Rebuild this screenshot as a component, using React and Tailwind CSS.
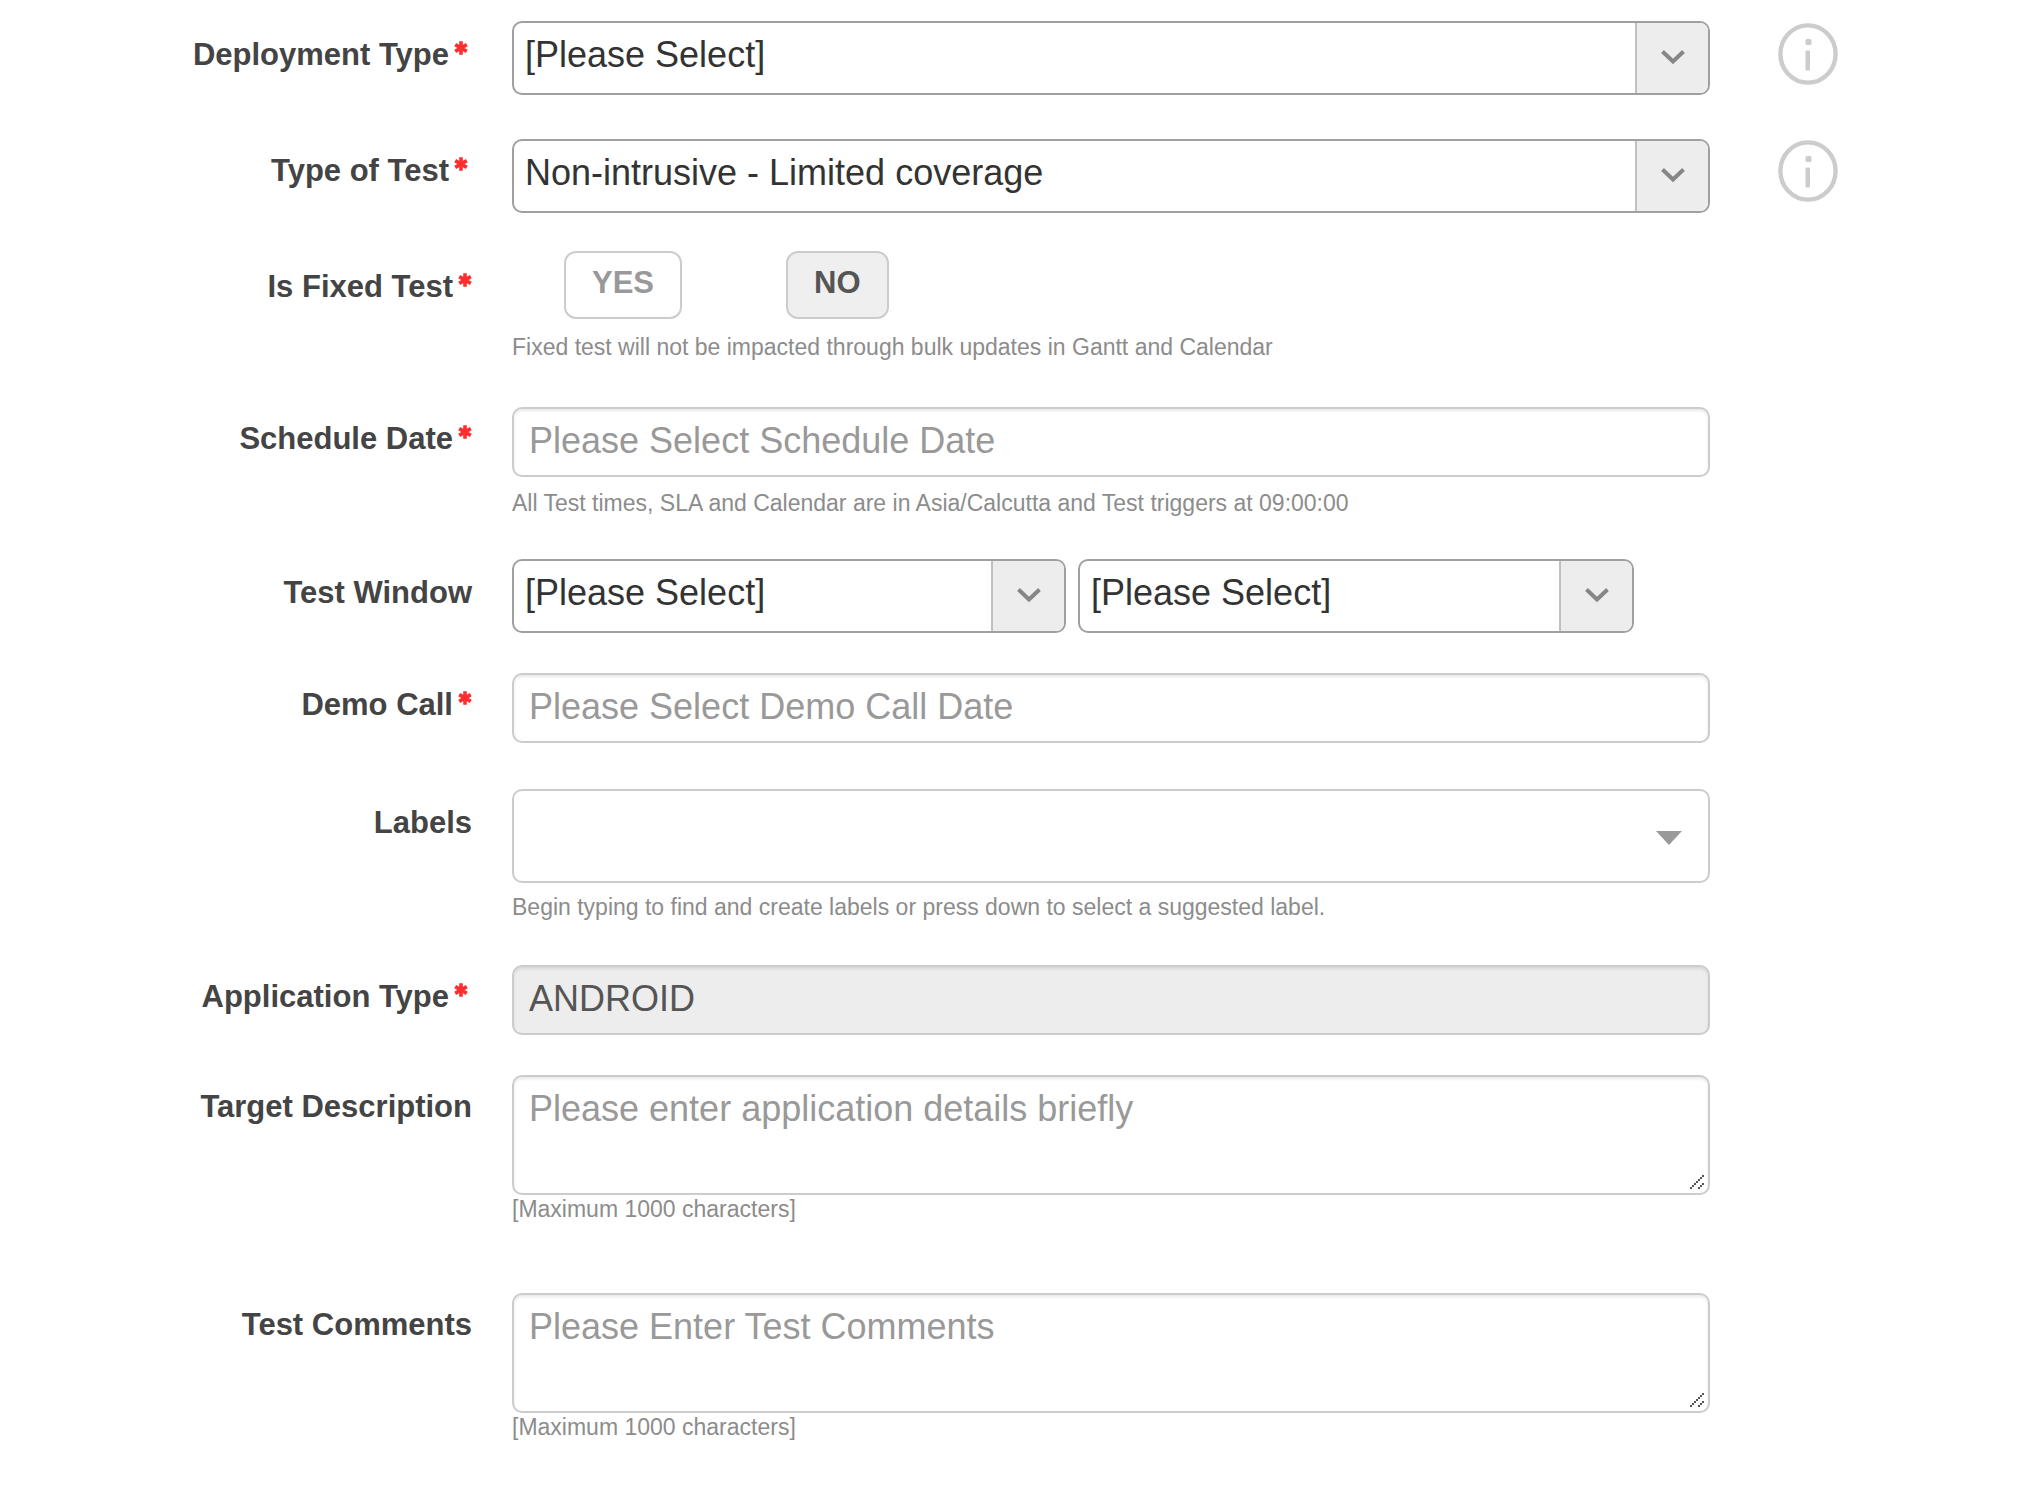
import React from "react";

const inputClass =
  "block w-full rounded-[10px] border-2 border-[#ccc] px-[15px] text-[36px] leading-[41px] shadow-[inset_0_2px_3px_rgba(0,0,0,0.09)] outline-none placeholder:text-[#999] placeholder:opacity-100";

function Star() {
  return (
    <svg
      className="mt-1 shrink-0"
      width="14"
      height="14"
      viewBox="0 0 14 14"
      stroke="#ff2d2d"
      strokeWidth="3.6"
      aria-hidden="true"
    >
      <path d="M7 0.3V13.7M1.2 3.6 12.8 10.4M12.8 3.6 1.2 10.4" />
    </svg>
  );
}

function Row({ label, htmlFor, required, children, aside, className = "", labelClass = "pt-[14px]" }) {
  return (
    <div className={`grid grid-cols-[512fr_1198fr_324fr] ${className}`}>
      <div className={`flex items-start justify-end pr-10 text-right text-[31px] leading-[36px] font-bold text-[#444] ${labelClass}`}>
        <label htmlFor={htmlFor} className="flex items-start gap-[5px]">
          {label}
          {required && <Star />}
        </label>
      </div>
      <div className="min-w-0">{children}</div>
      <div>{aside}</div>
    </div>
  );
}

function Select({ id, value, label }) {
  return (
    <div className="relative h-[74px] w-full min-w-0 overflow-hidden rounded-[10px] border-2 border-[#a0a0a0] bg-white">
      <select
        id={id}
        aria-label={label}
        defaultValue={value}
        className="block h-full w-full appearance-none bg-transparent pr-20 pb-[6px] pl-[11px] text-[36px] text-[#333] outline-none"
      >
        <option>{value}</option>
      </select>
      <div className="pointer-events-none absolute inset-y-0 right-0 flex w-[73px] items-center justify-center border-l-2 border-[#c0c0c0] bg-[#ededed] pb-[2px]">
        <svg width="24" height="16" viewBox="0 0 24 16" fill="none" stroke="#868686" strokeWidth="4">
          <path d="M1.5 2.5 12 12.5 22.5 2.5" />
        </svg>
      </div>
    </div>
  );
}

function Hint({ className = "", children }) {
  return <p className={`text-[23px] leading-[28px] text-[#8c8c8c] ${className}`}>{children}</p>;
}

function Info({ label }) {
  return (
    <button type="button" aria-label={label} className="ml-[68px] block">
      <svg width="60" height="62" viewBox="0 0 60 62" fill="none">
        <ellipse cx="30" cy="31" rx="27.6" ry="28.6" stroke="#cccccc" strokeWidth="4.4" />
        <rect x="27.5" y="16" width="6" height="6" rx="1.5" fill="#cccccc" />
        <rect x="27.5" y="27.5" width="4.5" height="20" rx="1" fill="#cccccc" />
      </svg>
    </button>
  );
}

const gripDots = [
  [0, 12], [2, 10], [4, 8], [6, 6], [8, 4], [10, 2], [12, 0],
  [8, 12], [10, 10], [12, 8],
];

function TextArea({ id, placeholder }) {
  return (
    <div className="relative">
      <textarea id={id} placeholder={placeholder} className={`${inputClass} h-[120px] resize-none bg-white pt-[11px] text-[#555]`} />
      <svg
        className="pointer-events-none absolute right-[6px] bottom-[6px]"
        width="14"
        height="14"
        fill="#555"
        shapeRendering="crispEdges"
      >
        {gripDots.map(([x, y]) => (
          <rect key={`${x}-${y}`} x={x} y={y} width="2" height="2" />
        ))}
      </svg>
    </div>
  );
}

export default function App() {
  return (
    <form className="min-h-screen bg-white pt-[21px] pb-10 font-['Liberation_Sans',Arial,sans-serif]">
      <Row
        label="Deployment Type"
        htmlFor="deployment"
        required
        labelClass="pt-4 mr-1"
        aside={<div className="pt-[2px]"><Info label="About deployment type" /></div>}
      >
        <Select id="deployment" value="[Please Select]" />
      </Row>

      <Row
        label="Type of Test"
        htmlFor="test-type"
        required
        className="mt-11"
        labelClass="pt-[14px] mr-1"
        aside={<div className="pt-px"><Info label="About type of test" /></div>}
      >
        <Select id="test-type" value="Non-intrusive - Limited coverage" />
      </Row>

      <Row label="Is Fixed Test" htmlFor="fixed-yes" required className="mt-[38px]" labelClass="pt-[18px]">
        <div className="flex gap-[104px] pl-[52px]">
          <button
            id="fixed-yes"
            type="button"
            aria-pressed="false"
            className="h-[68px] rounded-xl border-2 border-[#ccc] bg-white px-[26px] pb-1 text-[31px] font-bold text-[#999]"
          >
            YES
          </button>
          <button
            type="button"
            aria-pressed="true"
            className="h-[68px] rounded-xl border-2 border-[#ccc] bg-[#efefef] px-[26px] pb-1 text-[31px] font-bold text-[#555]"
          >
            NO
          </button>
        </div>
        <Hint className="mt-[14px]">Fixed test will not be impacted through bulk updates in Gantt and Calendar</Hint>
      </Row>

      <Row label="Schedule Date" htmlFor="schedule" required className="mt-[46px]">
        <input id="schedule" type="text" placeholder="Please Select Schedule Date" className={`${inputClass} h-[70px] bg-white pb-[2px] text-[#555]`} />
        <Hint className="mt-3">All Test times, SLA and Calendar are in Asia/Calcutta and Test triggers at 09:00:00</Hint>
      </Row>

      <Row label="Test Window" htmlFor="window-start" className="mt-[42px]" labelClass="pt-4">
        <div className="grid grid-cols-[554fr_556fr_64fr] gap-x-3">
          <Select id="window-start" value="[Please Select]" />
          <Select id="window-end" value="[Please Select]" label="Test Window end" />
        </div>
      </Row>

      <Row label="Demo Call" htmlFor="demo" required className="mt-10">
        <input id="demo" type="text" placeholder="Please Select Demo Call Date" className={`${inputClass} h-[70px] bg-white pb-[2px] text-[#555]`} />
      </Row>

      <Row label="Labels" htmlFor="labels" className="mt-[46px]" labelClass="pt-4">
        <div className="relative">
          <input
            id="labels"
            type="text"
            role="combobox"
            aria-expanded="false"
            className="block h-[94px] w-full rounded-[10px] border-2 border-[#ccc] bg-white pr-16 pl-[15px] text-[36px] text-[#555] outline-none"
          />
          <svg className="pointer-events-none absolute top-[42px] right-7" width="26" height="14" viewBox="0 0 26 14" fill="#999">
            <path d="M0 0H26L13 14Z" />
          </svg>
        </div>
        <Hint className="mt-[10px]">Begin typing to find and create labels or press down to select a suggested label.</Hint>
      </Row>

      <Row label="Application Type" htmlFor="app-type" required className="mt-11" labelClass="pt-[14px] mr-1">
        <input id="app-type" type="text" readOnly value="ANDROID" className={`${inputClass} h-[70px] bg-[#ededed] pb-[2px] text-[#555]`} />
      </Row>

      <Row label="Target Description" htmlFor="target" className="mt-10">
        <TextArea id="target" placeholder="Please enter application details briefly" />
        <Hint>[Maximum 1000 characters]</Hint>
      </Row>

      <Row label="Test Comments" htmlFor="comments" className="mt-[70px]">
        <TextArea id="comments" placeholder="Please Enter Test Comments" />
        <Hint>[Maximum 1000 characters]</Hint>
      </Row>
    </form>
  );
}
